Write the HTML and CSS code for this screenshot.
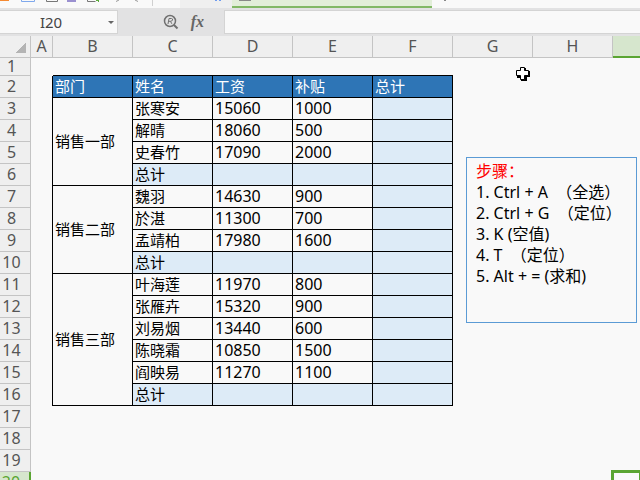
FILE: index.html
```html
<!DOCTYPE html>
<html lang="zh-CN">
<head>
    <meta charset="UTF-8">
    <meta name="viewport" content="width=device-width, initial-scale=1.0">
    <title>工资表</title>
    <link rel="stylesheet" href="styles.css">
</head>
<body>

    <div class="topbar">
        <div class="quick-tools">
            <svg width="160" height="8" viewBox="0 0 160 8">
                <path d="M0 .5h9" stroke="#f58a32" />
                <path d="M21.500 0v1.500h13v-1.500" fill="none" stroke="#7fa8ec" />
                <path d="M46.500 0v1.500h11v-1.500" fill="none" stroke="#777" />
                <path d="M67 1h9" stroke="#9a90d0" stroke-width="2" />
                <path d="M87.500 0v1.500h8" fill="none" stroke="#777" />
                <path d="M96 .5h3M98.500 0v2" fill="none" stroke="#5cab3c" />
                <path d="M119 0l-3 1.500M135 0l3 1.500" stroke="#999" />
                <path d="M152.500 0v6" stroke="#d0d0d0" />
            </svg>
        </div>
        <div class="home-tab">
            <svg width="48" height="8" viewBox="0 0 48 8">
                <path d="M35 .5h2M39 .5h2" stroke="#6f9cf0" />
            </svg>
        </div>
        <div class="doc-tab">
            <svg width="24" height="6" viewBox="0 0 24 6">
                <path d="M7 .5h12" stroke="#888" />
            </svg>
        </div>
        <div class="new-tab">
            <svg width="24" height="6" viewBox="0 0 24 6">
                <path d="M12 .5h2" stroke="#888" />
            </svg>
        </div>
    </div>

    <div class="formula-bar">
        <div class="name-box">
            <input type="text" value="I20" aria-label="名称框">
            <button type="button" class="drop-btn" aria-label="展开"></button>
        </div>
        <div class="formula-tools">
            <svg width="16" height="16" viewBox="0 0 16 16">
                <circle cx="7" cy="7" r="5.500" fill="none" stroke="#707070" stroke-width="1.500" />
                <path d="M5 10l1-5.500h2.500q1.500 .2 1 1.500t-2 1.300h-1.800M7.500 7.300l1.300 2.500" fill="none" stroke="#707070" />
                <path d="M11 11l3.500 3.500" stroke="#707070" stroke-width="2" />
            </svg>
            <button type="button" class="fx-btn">fx</button>
        </div>
        <input type="text" class="formula-input" aria-label="编辑栏">
    </div>

    <div class="sheet">
        <table>
            <colgroup>
                <col class="col-num">
                <col class="col-a">
                <col class="col-data" span="7">
                <col>
            </colgroup>
            <thead>
                <tr><th class="corner"></th><th>A</th><th>B</th><th>C</th><th>D</th><th>E</th><th>F</th><th>G</th><th>H</th><th class="active"></th></tr>
            </thead>
            <tbody>
                <tr class="first"><th>1</th><td></td><td class="bb"></td><td class="bb"></td><td class="bb"></td><td class="bb"></td><td class="bb"></td></tr>
                <tr class="title"><th>2</th><td class="br"></td><td>部门</td><td>姓名</td><td>工资</td><td>补贴</td><td>总计</td></tr>
                <tr class="data"><th>3</th><td class="br"></td><td rowspan="4">销售一部</td><td>张寒安</td><td class="num">15060</td><td class="num">1000</td><td class="sum"></td></tr>
                <tr class="data"><th>4</th><td class="br"></td><td>解晴</td><td class="num">18060</td><td class="num">500</td><td class="sum"></td></tr>
                <tr class="data"><th>5</th><td class="br"></td><td>史春竹</td><td class="num">17090</td><td class="num">2000</td><td class="sum"></td></tr>
                <tr class="data"><th>6</th><td class="br"></td><td class="sum">总计</td><td class="sum"></td><td class="sum"></td><td class="sum"></td></tr>
                <tr class="data"><th>7</th><td class="br"></td><td rowspan="4">销售二部</td><td>魏羽</td><td class="num">14630</td><td class="num">900</td><td class="sum"></td></tr>
                <tr class="data"><th>8</th><td class="br"></td><td>於湛</td><td class="num">11300</td><td class="num">700</td><td class="sum"></td></tr>
                <tr class="data"><th>9</th><td class="br"></td><td>孟靖柏</td><td class="num">17980</td><td class="num">1600</td><td class="sum"></td></tr>
                <tr class="data"><th>10</th><td class="br"></td><td class="sum">总计</td><td class="sum"></td><td class="sum"></td><td class="sum"></td></tr>
                <tr class="data"><th>11</th><td class="br"></td><td rowspan="6">销售三部</td><td>叶海莲</td><td class="num">11970</td><td class="num">800</td><td class="sum"></td></tr>
                <tr class="data"><th>12</th><td class="br"></td><td>张雁卉</td><td class="num">15320</td><td class="num">900</td><td class="sum"></td></tr>
                <tr class="data"><th>13</th><td class="br"></td><td>刘易烟</td><td class="num">13440</td><td class="num">600</td><td class="sum"></td></tr>
                <tr class="data"><th>14</th><td class="br"></td><td>陈晓霜</td><td class="num">10850</td><td class="num">1500</td><td class="sum"></td></tr>
                <tr class="data"><th>15</th><td class="br"></td><td>阎映易</td><td class="num">11270</td><td class="num">1100</td><td class="sum"></td></tr>
                <tr class="data"><th>16</th><td class="br"></td><td class="sum">总计</td><td class="sum"></td><td class="sum"></td><td class="sum"></td></tr>
                <tr><th>17</th></tr>
                <tr><th>18</th></tr>
                <tr><th>19</th></tr>
                <tr><th class="active">20</th><td colspan="8"></td><td class="selected"></td></tr>
            </tbody>
        </table>

        <!-- floating text box on the sheet -->
        <div class="note">
            <p class="note-title">步骤：</p>
            <p>1. Ctrl + A&nbsp; （全选）</p>
            <p>2. Ctrl + G&nbsp; （定位）</p>
            <p>3. K (空值)</p>
            <p>4. T&nbsp; （定位）</p>
            <p>5. Alt + = (求和)</p>
        </div>

        <svg class="cursor" width="16" height="16" viewBox="0 0 16 16">
            <path d="M6 2h5v3h4v6h-3v4h-6v-3h-4v-6h4z" fill="#000" />
            <path d="M5.500 1.500h4v3h4v5h-4v4h-4v-4h-4v-5h4z" fill="#fff" stroke="#000" />
        </svg>
    </div>

</body>
</html>
```
FILE: styles.css
```css
* {
    box-sizing: border-box;
}
body {
    margin: 0;
    height: 100vh;
    overflow: hidden;
    display: flex;
    flex-direction: column;
    background: #f9f9f9;
    font-family: "Noto Sans", "Noto Sans CJK SC", sans-serif;
    font-size: 15px;
    color: #000;
}
svg {
    display: block;
}
.topbar {
    display: flex;
    flex-shrink: 0;
    height: 8px;
    background: #f9f9f9;
}
.quick-tools {
    width: 180px;
}
.home-tab {
    width: 52px;
    background: #efefef;
}
.doc-tab {
    width: 200px;
    background: #e2eed9;
    border-bottom: 2px solid #82b866;
}
.new-tab {
    flex: 1;
}
.formula-bar {
    display: flex;
    flex-shrink: 0;
    height: 28px;
    padding: 2px 0;
    background: #e2e2e3;
}
.formula-bar input {
    font: inherit;
    color: #444;
    background: #f9f9f9;
    border: none;
    outline: none;
    min-width: 0;
}
.name-box {
    display: flex;
    width: 118px;
    background: #f9f9f9;
    border: 1px solid #d4d4d4;
    border-left: none;
}
.name-box input {
    flex: 1;
    padding: 0 6px 0 0;
    text-align: center;
}
.drop-btn {
    width: 9px;
    padding: 0;
    border: none;
    background: none;
    display: flex;
    align-items: center;
}
.drop-btn::before {
    content: "";
    border: 3px solid transparent;
    border-top-color: #666;
    border-bottom: none;
}
.formula-tools {
    display: flex;
    align-items: center;
    justify-content: flex-end;
    gap: 12px;
    width: 106px;
    padding-right: 20px;
}
.fx-btn {
    padding: 0;
    border: none;
    background: none;
    font: italic bold 16px/20px "Liberation Serif", serif;
    color: #666;
}
.formula-bar .formula-input {
    flex: 1;
    border: 1px solid #d4d4d4;
    border-right: none;
}
.sheet {
    position: relative;
    flex: 1;
    min-height: 0;
}
table {
    table-layout: fixed;
    width: 100%;
    border-collapse: separate;
    border-spacing: 0;
}
.col-num {
    width: 31px;
}
.col-a {
    width: 22px;
}
.col-data {
    width: 80px;
}
tr {
    height: 22px;
}
tr.first {
    height: 18px;
}
th, td {
    padding: 0;
    line-height: 17px;
    white-space: nowrap;
}
th {
    font-size: 16px;
    font-weight: normal;
    color: #555;
    background: #efefef;
    border-right: 1px solid #c4c4c4;
    border-bottom: 1px solid #c4c4c4;
}
tbody th {
    padding-right: 7px;
}
.corner {
    background: linear-gradient(135deg, transparent 50%, #b4b4b4 50%) no-repeat 15px 6px / 11px 11px #efefef;
}
th.active {
    background: #d6e6cd;
    color: #5aa532;
}
thead .active {
    border-right: none;
    border-bottom: 2px solid #5aa532;
}
tbody .active {
    border-right: 2px solid #5aa532;
}
.br {
    border-right: 1px solid #000;
}
.bb {
    border-bottom: 1px solid #000;
}
.title td + td, .data td + td {
    padding-left: 2px;
    border-right: 1px solid #000;
    border-bottom: 1px solid #000;
}
.title td + td {
    background: #2e75b6;
    color: #fff;
}
.num {
    font-size: 16px;
}
.sum {
    background: #ddebf7;
}
.selected {
    outline: 3px solid #5aa532;
    outline-offset: -1px;
}
.note {
    position: absolute;
    top: 121px;
    left: 466px;
    width: 171px;
    height: 166px;
    padding: 3px 9px;
    border: 1px solid #5b9bd5;
    font-size: 16px;
    line-height: 21px;
    white-space: nowrap;
}
.note p {
    margin: 0;
}
.note-title {
    color: #f00;
}
.cursor {
    position: absolute;
    top: 30px;
    left: 515px;
}
```
